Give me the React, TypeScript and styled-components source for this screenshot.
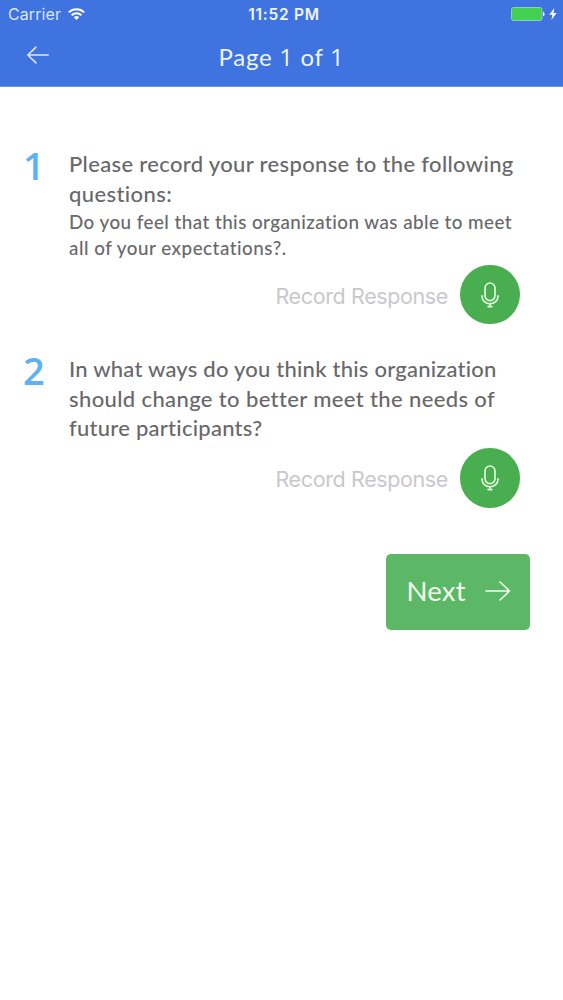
import React from 'react';
import styled, { createGlobalStyle } from 'styled-components';

const GlobalStyle = createGlobalStyle`
  *, *::before, *::after { box-sizing: border-box; }
  body { margin: 0; background: #fff; font-family: Lato, "Open Sans", sans-serif; }
  button { font: inherit; border: 0; padding: 0; cursor: pointer; }
  svg { display: block; flex: none; }
`;

const Screen = styled.div`
  width: 563px;
  height: 1000px;
  background: #fff;
  overflow: hidden;
`;

const Header = styled.header`
  height: 87px;
  background: #3e73e0;
  color: #eff5ff;
  border-bottom: 1px solid #6d95e6;
`;

const StatusBar = styled.div`
  height: 28px;
  display: grid;
  grid-template-columns: 1fr auto 1fr;
  align-items: center;
  padding: 0 6px 0 8px;
  font-family: Inter, sans-serif;
  font-size: 16px;
  line-height: 28px;
`;

const Carrier = styled.div`
  display: flex;
  align-items: center;
  gap: 7px;
  color: #d9e7ff;
  letter-spacing: 0.1px;
`;

const Clock = styled.div`
  font-size: 15.5px;
  line-height: 26px;
  font-weight: 600;
  letter-spacing: 0.75px;
  padding: 2px 0 0 3px;
`;

const Power = styled.div`
  display: flex;
  justify-content: flex-end;
  align-items: center;
  gap: 4px;
`;

const NavBar = styled.div`
  height: 58px;
  display: grid;
  grid-template-columns: 80px 1fr 80px;
  align-items: center;
`;

const BackButton = styled.button`
  background: none;
  color: #dce8ff;
  padding: 0 0 4px 26px;
`;

const Title = styled.h1`
  margin: 0;
  text-align: center;
  font-size: 24px;
  font-weight: 400;
  line-height: 30px;
  letter-spacing: 0.7px;
`;

const Digit = styled.span`
  font-family: "Open Sans", sans-serif;
  line-height: 1;
`;

const Survey = styled.main`
  padding: 62px 33px 0 24px;
`;

const Question = styled.section<{ $height: number }>`
  display: grid;
  grid-template-columns: 45px 1fr;
  height: ${(p) => p.$height}px;
`;

const Numeral = styled.div`
  font-family: "Open Sans", sans-serif;
  font-size: 38px;
  line-height: 32px;
  font-weight: 600;
  letter-spacing: -0.5px;
  margin-left: -1px;
  color: #5db2f3;
`;

const Line = styled.span<{ $spacing: number }>`
  display: block;
  white-space: nowrap;
  letter-spacing: ${(p) => p.$spacing}px;
`;

const Prompt = styled.p`
  margin: 0;
  font-size: 22px;
  font-weight: 500;
  line-height: 29.7px;
  color: #68686a;
`;

const Detail = styled(Prompt)`
  font-size: 18.8px;
  line-height: 26px;
  padding-top: 1px;
`;

const RecordRow = styled.div<{ $top: number }>`
  display: flex;
  justify-content: flex-end;
  align-items: center;
  gap: 12px;
  padding-right: 10.5px;
  margin-top: ${(p) => p.$top}px;
`;

const RecordLabel = styled.span`
  font-family: Inter, sans-serif;
  font-size: 21.5px;
  line-height: 28px;
  letter-spacing: -0.38px;
  color: #c9c8cc;
  padding-top: 2px;
  white-space: nowrap;
`;

const RecordButton = styled.button`
  width: 59.5px;
  height: 59.5px;
  border-radius: 50%;
  background: #48ae50;
  color: #e3ffdf;
  display: flex;
  align-items: center;
  justify-content: center;
`;

const NextButton = styled.button`
  display: flex;
  align-items: center;
  justify-content: space-between;
  width: 144.5px;
  height: 76px;
  margin-left: auto;
  padding: 0 19px 2px 21px;
  border-radius: 5px;
  background: #5cb767;
  color: #f1fff0;
  font-size: 27.5px;
  letter-spacing: 0.2px;
`;

const NextLabel = styled.span`
  padding-bottom: 2px;
`;

const WifiIcon = () => (
  <svg width="17" height="12" viewBox="0 0 17 12" fill="none" stroke="#fff" strokeWidth="2">
    <path d="M.8 4.4a11 11 0 0 1 15.4 0M3.6 7.3a7 7 0 0 1 9.8 0" />
    <path d="M8.5 12 5.8 9.3a3.8 3.8 0 0 1 5.4 0z" fill="#fff" stroke="none" />
  </svg>
);

const BatteryIcon = () => (
  <svg width="34" height="14" viewBox="0 0 34 14">
    <rect x=".5" y=".5" width="30.5" height="13" rx="2" fill="#43d250" stroke="#8fc9cd" />
    <path d="M32 4.7c2.2.6 2.2 4 0 4.6z" fill="#e9f5ff" />
  </svg>
);

const BoltIcon = () => (
  <svg width="8" height="12" viewBox="0 0 8 12">
    <path d="M5.3 0 .3 6.8h3L2.4 12l5.2-7H4.5z" fill="#fff" />
  </svg>
);

const BackArrow = () => (
  <svg width="24" height="18" viewBox="0 0 24 18" fill="none" stroke="currentColor" strokeWidth="1.6" strokeLinecap="round" strokeLinejoin="round">
    <path d="M22.200 9H1.800M10 1.200 1.800 9l8.200 7.800" />
  </svg>
);

const ForwardArrow = () => (
  <svg width="26" height="20" viewBox="0 0 26 20" fill="none" stroke="currentColor" strokeWidth="1.6" strokeLinecap="round" strokeLinejoin="round">
    <path d="M1 10h23.500M15 1l9.500 9-9.500 9" />
  </svg>
);

const MicIcon = () => (
  <svg width="20" height="26" viewBox="0 0 20 26" fill="none" stroke="currentColor" strokeWidth="1.6" strokeLinecap="round">
    <rect x="5" y="1" width="10" height="17.600" rx="5" />
    <path d="M2 13.800v.7a8 7.200 0 0 0 16 0v-.7M10 21.800v3M8 24.600h4" />
  </svg>
);

type LineData = { text: string; spacing: number };

const Lines = ({ items }: { items: LineData[] }) => (
  <>
    {items.map((l) => (
      <Line key={l.text} $spacing={l.spacing}>{l.text}</Line>
    ))}
  </>
);

const Recorder = ({ top }: { top: number }) => (
  <RecordRow $top={top}>
    <RecordLabel>Record Response</RecordLabel>
    <RecordButton aria-label="Record"><MicIcon /></RecordButton>
  </RecordRow>
);

export default function App() {
  return (
    <Screen>
      <GlobalStyle />
      <Header>
        <StatusBar>
          <Carrier>Carrier <WifiIcon /></Carrier>
          <Clock>11:52 PM</Clock>
          <Power><BatteryIcon /><BoltIcon /></Power>
        </StatusBar>
        <NavBar>
          <BackButton aria-label="Back"><BackArrow /></BackButton>
          <Title>Page <Digit>1</Digit> of <Digit>1</Digit></Title>
        </NavBar>
      </Header>
      <Survey>
        <Question $height={205}>
          <Numeral>1</Numeral>
          <div>
            <Prompt>
              <Lines items={[
                { text: 'Please record your response to the following', spacing: 0.34 },
                { text: 'questions:', spacing: 0.4 },
              ]} />
            </Prompt>
            <Detail>
              <Lines items={[
                { text: 'Do you feel that this organization was able to meet', spacing: 0.46 },
                { text: 'all of your expectations?.', spacing: 0.52 },
              ]} />
            </Detail>
            <Recorder top={3.5} />
          </div>
        </Question>
        <Question $height={200}>
          <Numeral>2</Numeral>
          <div>
            <Prompt>
              <Lines items={[
                { text: 'In what ways do you think this organization', spacing: 0.23 },
                { text: 'should change to better meet the needs of', spacing: 0.38 },
                { text: 'future participants?', spacing: 0.25 },
              ]} />
            </Prompt>
            <Recorder top={5} />
          </div>
        </Question>
        <NextButton><NextLabel>Next</NextLabel> <ForwardArrow /></NextButton>
      </Survey>
    </Screen>
  );
}
